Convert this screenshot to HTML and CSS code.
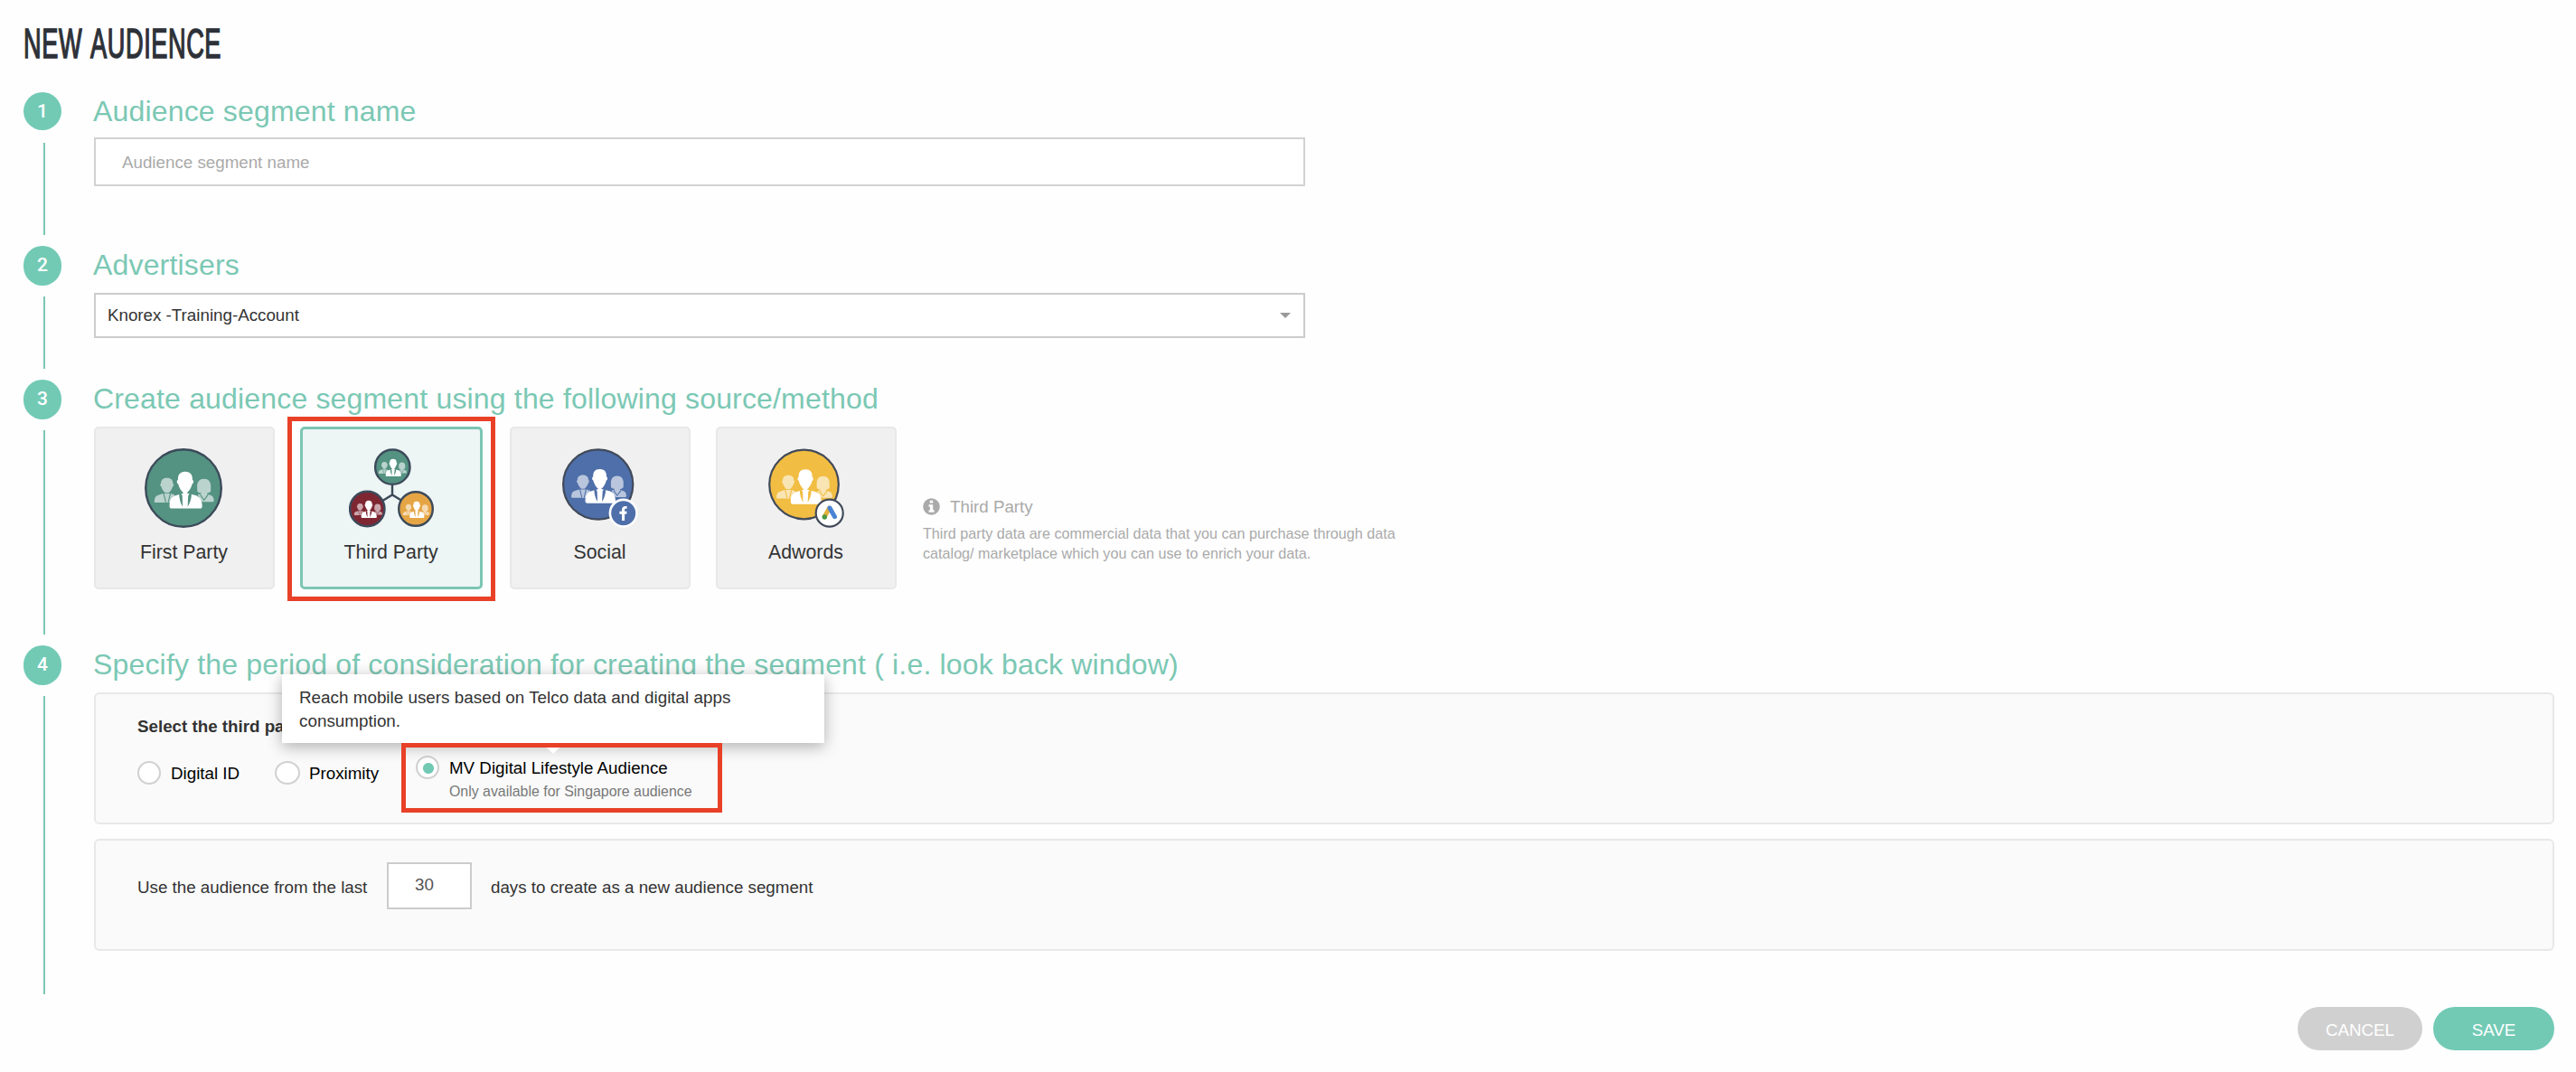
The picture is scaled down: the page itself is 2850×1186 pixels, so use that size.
FILE: index.html
```html
<!DOCTYPE html>
<html lang="en">
<head>
    <meta charset="UTF-8">
    <meta name="viewport" content="width=device-width, initial-scale=1.0">
    <title>New Audience</title>
    <link rel="stylesheet" href="styles.css">
</head>
<body>
    <!-- shared icon shapes, currentColor is the circle colour behind the people -->
    <svg class="sprite" aria-hidden="true">
        <symbol id="people" viewBox="0 0 66 41" overflow="visible">
            <g fill="#fff" opacity="0.6">
                <path d="M14 7c4.600 0 6.800 2.600 6.600 6.300 1.300.2 1.100 2.800-.2 3.200-.6 2.700-2.700 5.800-4.600 7h-3.600c-1.900-1.200-4-4.300-4.600-7-1.300-.4-1.500-3-.2-3.200C7.200 9.600 9.400 7 14 7z"/>
                <path d="M9.500 24.300h9l4.300 1.700-4.800 8.300H1.200c-.9 0-1.200-.5-1.100-1.300.3-4.600 1.500-6 4.400-7z"/>
                <path d="M55 8c5 0 7.500 3.300 7.500 8v5.500c-1 1.800-2.500 2.400-4 2.200v1.300l3.500 1c2.700.9 3.800 2.400 3.900 6 0 1-.4 1.600-1.300 1.600H53l-5-8 3.700-.8v-1.200c-1.700.2-3-.4-4.200-2.100V16c0-4.700 2.500-8 7.500-8z"/>
            </g>
            <path d="M10.300 24.300l2.400 9.700M17.800 24.300l-2.300 9.700M50.800 25.600l4.200 6 4.500-6" fill="none" stroke="currentColor" stroke-width="1.100"/>
            <path d="M34.200 0c5.700 0 8.300 3.600 8 9.300 1.700.2 1.500 4-.3 4.400-.8 4.100-3.900 8.400-6 10l8.700 2.300c5.400 1.500 8.100 4 8.400 12 0 1.900-.8 2.900-2.500 2.900H19.300c-1.700 0-2.500-1-2.500-2.900.3-8 3-10.500 8.400-12l7.300-2.300c-2.100-1.600-5.200-5.900-6-10-1.800-.4-2-4.200-.3-4.400C25.900 3.600 28.500 0 34.200 0z" fill="#fff"/>
            <path d="M27.500 24.300l1.800-.6 1.700 2.800.4 12.500c-2.600-4.600-3.900-9.200-3.900-14.700zM41.200 24.300l-1.800-.6-1.900 2.800-.6 12.500c2.800-4.600 4.300-9.200 4.300-14.700z" fill="currentColor"/>
        </symbol>
    </svg>

    <div class="page">
        <h1 class="page-title"><span>NEW AUDIENCE</span></h1>

        <section class="step step-name">
            <div class="step-marker">
                <div class="step-number">1</div>
                <div class="step-line"></div>
            </div>
            <div class="step-body">
                <h2>Audience segment name</h2>
                <input type="text" class="name-input" placeholder="Audience segment name">
            </div>
        </section>

        <section class="step step-advertisers">
            <div class="step-marker">
                <div class="step-number">2</div>
                <div class="step-line"></div>
            </div>
            <div class="step-body">
                <h2>Advertisers</h2>
                <div class="select">
                    <span>Knorex -Training-Account</span>
                    <i class="caret"></i>
                </div>
            </div>
        </section>

        <section class="step step-source">
            <div class="step-marker">
                <div class="step-number">3</div>
                <div class="step-line"></div>
            </div>
            <div class="step-body">
                <h2>Create audience segment using the following source/method</h2>
                <div class="sources">
                    <div class="card">
                        <svg class="card-icon" width="86" height="88" viewBox="0 0 86 88">
                            <ellipse cx="43" cy="44" rx="41.800" ry="42.800" fill="#549281" stroke="#3c4a5a" stroke-width="2.400"/>
                            <use href="#people" x="10.700" y="25.700" width="66" height="41" color="#549281"/>
                        </svg>
                        <span>First Party</span>
                    </div>

                    <div class="card selected">
                        <svg class="card-icon" width="94" height="88" viewBox="0 0 94 88">
                            <path d="M48 40v11.500M34 60l14-8.500L62 60" fill="none" stroke="#3c4a5a" stroke-width="2.400"/>
                            <circle cx="48.300" cy="20.700" r="19.200" fill="#549281" stroke="#3c4a5a" stroke-width="2.400"/>
                            <circle cx="20.300" cy="67" r="19.200" fill="#7e2733" stroke="#3c4a5a" stroke-width="2.400"/>
                            <circle cx="74" cy="67" r="18.800" fill="#e6a545" stroke="#3c4a5a" stroke-width="2.400"/>
                            <use href="#people" x="32.700" y="11.700" width="31.300" height="19.400" color="#549281"/>
                            <use href="#people" x="5.700" y="57.700" width="31.300" height="19.400" color="#7e2733"/>
                            <use href="#people" x="59.700" y="58.700" width="29.500" height="18.300" color="#e6a545"/>
                        </svg>
                        <span>Third Party</span>
                        <div class="highlight highlight-card"></div>
                    </div>

                    <div class="card">
                        <svg class="card-icon" width="84" height="88" viewBox="0 0 84 88">
                            <circle cx="39.700" cy="40" r="38.600" fill="#4e6fa9" stroke="#414a5a" stroke-width="2.200"/>
                            <use href="#people" x="10" y="23" width="61" height="37.900" color="#4e6fa9"/>
                            <circle cx="67.700" cy="71.700" r="14.800" fill="#4e6fa9" stroke="#fff" stroke-width="2.600"/>
                            <path d="M66 80v-7.200h-2.600v-3H66v-1.900c0-2.700 1.500-4 4-4 .7 0 1.300.1 1.600.1v2.700h-1.100c-1.100 0-1.400.5-1.400 1.400v1.700h2.500l-.4 3h-2.100V80z" fill="#fff"/>
                        </svg>
                        <span>Social</span>
                    </div>

                    <div class="card">
                        <svg class="card-icon" width="84" height="88" viewBox="0 0 84 88">
                            <circle cx="39.500" cy="40" r="38.300" fill="#f1bd42" stroke="#414a5a" stroke-width="2.200"/>
                            <use href="#people" x="9" y="23.300" width="62" height="38.500" color="#f1bd42"/>
                            <circle cx="67.700" cy="71.700" r="15" fill="#fff" stroke="#414a5a" stroke-width="2.200"/>
                            <g stroke-linecap="round" stroke-width="5">
                                <path d="M67.500 66.200l-5.300 9.500" stroke="#e0b13c"/>
                                <path d="M68 66l5.500 9.700" stroke="#4a83d4"/>
                            </g>
                            <circle cx="62.300" cy="76" r="2.700" fill="#4a9a45"/>
                        </svg>
                        <span>Adwords</span>
                    </div>

                    <div class="source-info">
                        <div class="source-info-title">
                            <svg width="19" height="19" viewBox="0 0 19 19">
                                <circle cx="9.500" cy="9.500" r="9.300" fill="#aaa"/>
                                <path d="M7.800 2.800h3.400v2.800H7.800zM6.600 7.200h4.600v6.100h1.400v2.500H6.600v-2.500H8V9.700H6.600z" fill="#fff"/>
                            </svg>
                            <span>Third Party</span>
                        </div>
                        <p>Third party data are commercial data that you can purchase through data<br>catalog/ marketplace which you can use to enrich your data.</p>
                    </div>
                </div>
            </div>
        </section>

        <section class="step step-period">
            <div class="step-marker">
                <div class="step-number">4</div>
                <div class="step-line"></div>
            </div>
            <div class="step-body">
                <h2>Specify the period of consideration for creating the segment ( i.e. look back window)</h2>

                <div class="panel panel-provider">
                    <div class="panel-label">Select the third party</div>
                    <div class="radios">
                        <label class="radio"><i></i><span>Digital ID</span></label>
                        <label class="radio radio-proximity"><i></i><span>Proximity</span></label>
                        <div class="radio radio-mv checked">
                            <i></i>
                            <span>MV Digital Lifestyle Audience<small>Only available for Singapore audience</small></span>
                            <div class="highlight highlight-radio"></div>
                        </div>
                    </div>
                    <div class="tooltip">Reach mobile users based on Telco data and digital apps<br>consumption.</div>
                </div>

                <div class="panel panel-days">
                    <span class="days-before">Use the audience from the last</span>
                    <input type="text" class="days-input" value="30">
                    <span class="days-after">days to create as a new audience segment</span>
                </div>
            </div>
        </section>

        <div class="actions">
            <button class="btn btn-cancel">CANCEL</button>
            <button class="btn btn-save">SAVE</button>
        </div>
    </div>
</body>
</html>
```

FILE: styles.css
```css
* {
    margin: 0;
    padding: 0;
    box-sizing: border-box;
}

body {
    font-family: "Liberation Sans", Arial, sans-serif;
    font-size: 18.75px;
    color: #333;
    background: #fefefe;
}

input,
button {
    font: inherit;
    border-radius: 0;
    outline: none;
}

.sprite {
    position: absolute;
    width: 0;
    height: 0;
}

.page {
    padding: 0 24px 0 26px;
}

.page-title {
    height: 102px;
    padding-top: 22px;
    font-size: 46px;
    line-height: 52px;
    font-weight: 400;
    color: #2d3138;
    white-space: nowrap;
}

.page-title span {
    display: inline-block;
    letter-spacing: 1px;
    word-spacing: 4px;
    -webkit-text-stroke: 1.6px #2d3138;
    transform: scaleX(0.59);
    transform-origin: left;
}

/* Steps */
.step {
    display: flex;
}

.step-name {
    height: 170px;
}

.step-advertisers {
    height: 148px;
}

.step-source {
    height: 294px;
}

.step-period {
    height: 398px;
}

.step-marker {
    display: flex;
    flex-direction: column;
    width: 77px;
}

.step-number {
    width: 42px;
    height: 44px;
    border-radius: 21px;
    background: #72cab5;
    color: #fff;
    font-family: Roboto, sans-serif;
    font-size: 21px;
    font-weight: 500;
    line-height: 42px;
    text-align: center;
}

.step-name .step-number {
    height: 42px;
    margin-bottom: 2px;
}

.step-line {
    flex: 1;
    width: 2px;
    margin: 12px 0 12px 22px;
    background: #7cc6b3;
}

.step-body {
    flex: 1;
}

h2 {
    height: 50px;
    padding-top: 1px;
    font-size: 32px;
    line-height: 40px;
    font-weight: 400;
    letter-spacing: 0.17px;
    color: #7bc8b4;
    white-space: nowrap;
}

.name-input,
.select,
.sources,
.panel {
    margin-left: 1px;
}

.name-input {
    display: block;
    width: 1340px;
    height: 54px;
    padding: 2px 29px 0;
    border: 2px solid #d2d2d2;
    background: #fff;
}

.name-input::placeholder {
    color: #aaa;
}

.select {
    display: flex;
    align-items: center;
    justify-content: space-between;
    width: 1340px;
    height: 50px;
    margin-top: 2px;
    padding: 0 14px 1px 13px;
    border: 2px solid #ccc;
    background: #fff;
}

.caret {
    border: 6px solid transparent;
    border-top-color: #999;
    border-bottom: 0;
}

/* Source cards */
.sources {
    display: flex;
    gap: 28px;
    margin-top: 2px;
}

.card {
    position: relative;
    display: flex;
    flex-direction: column;
    align-items: center;
    width: 200px;
    height: 180px;
    padding-top: 22px;
    border: 2px solid #e8e8e8;
    border-radius: 5px;
    background: #f0f0f0;
    font-size: 21.3px;
    line-height: 26px;
}

.card.selected {
    width: 202px;
    margin-right: 2px;
    padding-top: 21px;
    border: 3px solid #7cc6b3;
    background: #edf5f5;
}

.card-icon {
    display: block;
    margin-bottom: 14px;
}

.card > span {
    margin-right: 1px;
}

.card:first-child .card-icon {
    margin-right: 2px;
}

.highlight {
    position: absolute;
    border: 5px solid #e84128;
}

.highlight-card {
    top: -14px;
    left: -17px;
    width: 230px;
    height: 204px;
}

.source-info {
    margin-left: 1px;
    padding-top: 77px;
    color: #aaa;
}

.source-info-title {
    display: flex;
    align-items: center;
    gap: 11px;
    height: 24px;
}

.source-info-title svg {
    margin-bottom: 1px;
}

.source-info p {
    margin-top: 6px;
    font-size: 16.17px;
    line-height: 22px;
}

/* Panels */
.panel {
    position: relative;
    border: 2px solid #e8e8e8;
    border-radius: 6px;
    background: #fafafa;
}

.panel-provider {
    height: 146px;
    margin-top: 2px;
    padding: 24px 46px 0;
}

.panel-label {
    font-weight: 700;
    line-height: 24px;
}

.radios {
    display: flex;
    align-items: flex-start;
    margin-top: 26px;
    color: #000;
}

.radio {
    position: relative;
    display: flex;
    width: 152px;
    line-height: 27px;
    white-space: nowrap;
}

.radio i {
    width: 26px;
    height: 26px;
    margin-right: 11px;
    border: 2px solid #d0d0d0;
    border-radius: 50%;
    background: #fff;
}

.radio-proximity {
    width: 156px;
}

.radio-proximity i {
    width: 28px;
    margin-right: 10px;
}

.radio-mv {
    width: 330px;
    margin-top: -6px;
}

.radio.checked i {
    background: radial-gradient(circle at 12px 12px, #72c9b4 5.5px, #fff 6.5px);
}

.radio small {
    display: block;
    font-size: 15.9px;
    line-height: 26px;
    color: #777;
}

.highlight-radio {
    top: -14px;
    left: -16px;
    width: 355px;
    height: 77px;
    z-index: 2;
}

.tooltip {
    position: absolute;
    top: -22px;
    left: 206px;
    width: 600px;
    height: 76px;
    padding: 13px 19px;
    background: #fff;
    font-size: 18.85px;
    line-height: 26px;
    box-shadow: 0 4px 16px rgba(0, 0, 0, 0.3);
}

.tooltip::after {
    content: "";
    position: absolute;
    top: 100%;
    left: 288px;
    border: 12px solid transparent;
    border-top-color: #fff;
    border-bottom: 0;
}

.panel-days {
    display: flex;
    height: 124px;
    margin-top: 16px;
    padding: 24px 46px;
    line-height: 56px;
}

.days-before {
    width: 276px;
}

.days-input {
    width: 94px;
    height: 52px;
    margin-right: 21px;
    padding: 0 0 2px 29px;
    border: 2px solid #ccc;
    background: #fff;
    color: #555;
}

/* Footer buttons */
.actions {
    display: flex;
    justify-content: flex-end;
    gap: 12px;
    padding-top: 2px;
}

.btn {
    height: 48px;
    padding-top: 3px;
    border: 0;
    border-radius: 24px;
    color: #fff;
}

.btn-cancel {
    width: 138px;
    background: #d0d0d0;
}

.btn-save {
    width: 134px;
    background: #72cab5;
}
```
